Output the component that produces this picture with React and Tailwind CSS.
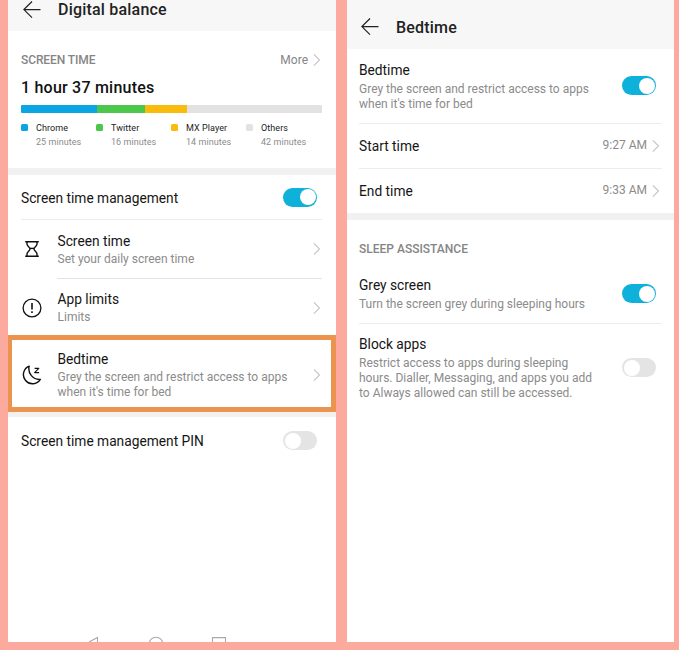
import React from "react";

const usage = [
  { name: "Chrome", minutes: 25, width: "w-[75.5px]", color: "bg-[#0aa5e2]" },
  { name: "Twitter", minutes: 16, width: "w-[48px]", color: "bg-[#4bc84b]" },
  { name: "MX Player", minutes: 14, width: "w-[42.5px]", color: "bg-[#f9bb0c]" },
  { name: "Others", minutes: 42, width: "flex-1", color: "bg-[#e2e2e2]" },
];

const BackArrow = () => (
  <svg
    className="w-[18px] h-[18px] shrink-0"
    viewBox="0 0 18 18"
    fill="none"
    stroke="#222"
    strokeWidth="1.2"
  >
    <path d="M17.5 8.6H1.2M9 0.5L0.9 8.6L9 16.7" />
  </svg>
);

const Chevron = () => (
  <svg
    className="w-[8px] h-[14px] shrink-0"
    viewBox="0 0 8 14"
    fill="none"
    stroke="#c4c4c4"
    strokeWidth="1.1"
  >
    <path d="M0.9 1.4L6.5 7L0.9 12.6" />
  </svg>
);

const Hourglass = () => (
  <svg
    className="w-[20px] h-[20px]"
    viewBox="0 0 20 20"
    fill="none"
    stroke="#111"
    strokeWidth="1.4"
  >
    <path d="M3.2 2.8H16.8M3.2 17.2H16.8" />
    <path d="M5 2.8V5C5 7.4 8 8 8 10C8 12 5 12.6 5 15V17.2M15 2.8V5C15 7.4 12 8 12 10C12 12 15 12.6 15 15V17.2" />
    <path d="M8 9.4H12" />
  </svg>
);

const Alert = () => (
  <svg
    className="w-[20px] h-[20px]"
    viewBox="0 0 20 20"
    fill="none"
    stroke="#111"
    strokeWidth="1.3"
  >
    <circle cx="10" cy="10" r="8.9" />
    <path d="M10 5V11.6M10 13.2V14.9" strokeWidth="1.6" />
  </svg>
);

const Moon = () => (
  <svg
    className="w-[20px] h-[20px]"
    viewBox="0 0 20 20"
    fill="none"
    stroke="#111"
    strokeWidth="1.4"
    strokeLinejoin="round"
  >
    <path d="M7.2 1.2A9.1 9.1 0 1 0 18.3 14.4A10.6 10.6 0 0 1 7.2 1.2Z" />
    <path d="M12.6 3.4H16.8L12.6 7.6H17.1" strokeWidth="1.1" />
  </svg>
);

const Toggle = ({ on }) => (
  <div
    className={`flex items-center w-[34px] h-[19px] rounded-full p-[1.5px] shrink-0 ${
      on ? "bg-[#0eb1da] justify-end" : "bg-[#e4e4e4]"
    }`}
  >
    <div className="w-4 h-4 rounded-full bg-white" />
  </div>
);

const Title = ({ children }) => (
  <div className="text-[13.75px] leading-[18px] text-[#151515]">{children}</div>
);

const Detail = ({ children }) => (
  <div className="text-[12px] leading-[15px] text-[#8b8b8b] whitespace-pre-line">
    {children}
  </div>
);

const LinkRow = ({ icon, title, detail, className }) => (
  <div className={`flex items-center pr-[15px] pl-[14px] ${className}`}>
    <div className="w-[35.5px] shrink-0">{icon}</div>
    <div className="flex-1">
      <Title>{title}</Title>
      <div className="mt-[2px]">
        <Detail>{detail}</Detail>
      </div>
    </div>
    <Chevron />
  </div>
);

const TimeRow = ({ title, time }) => (
  <div className="flex items-center h-[44px] pr-[2px]">
    <div className="flex-1">
      <Title>{title}</Title>
    </div>
    <div className="mr-[5px]">
      <Detail>{time}</Detail>
    </div>
    <Chevron />
  </div>
);

const DigitalBalance = () => (
  <div className="w-[328px] h-[642px] bg-white overflow-hidden flex flex-col">
    <header className="h-[31px] bg-[#f7f7f7] shrink-0 flex items-center pb-[12px] pl-[15px] gap-[17px]">
      <BackArrow />
      <h1 className="text-[16px] leading-[19px] tracking-[0.2px] font-medium text-[#222]">
        Digital balance
      </h1>
    </header>

    <section className="h-[137px] shrink-0 px-[13px] pt-[21px]">
      <div className="flex items-center h-[15px] pr-[2px]">
        <span className="flex-1 text-[12px] font-medium tracking-[-0.1px] text-[#858585]">
          SCREEN TIME
        </span>
        <span className="pt-px text-[12px] leading-[15px] text-[#858585] mr-[5px]">
          More
        </span>
        <Chevron />
      </div>
      <div className="mt-[11px] h-[20px] text-[16px] leading-[20px] tracking-[0.22px] font-medium text-[#111]">
        1 hour 37 minutes
      </div>
      <div className="mt-[7px] flex h-[8px] w-[301px] rounded-[1px] overflow-hidden">
        {usage.map((app) => (
          <div key={app.name} className={`${app.width} ${app.color}`} />
        ))}
      </div>
      <div className="mt-[9px] grid grid-cols-[75px_75px_75px_75px]">
        {usage.map((app) => (
          <div key={app.name} className="flex">
            <div
              className={`w-[7px] h-[7px] rounded-[1.5px] mt-[2px] mr-[8px] shrink-0 ${app.color}`}
            />
            <div className="whitespace-nowrap">
              <div className="text-[9px] leading-[12px] tracking-[0.08px] text-[#222]">
                {app.name}
              </div>
              <div className="mt-[2px] text-[9px] leading-[13px] tracking-[0.05px] text-[#8b8b8b]">
                {app.minutes} minutes
              </div>
            </div>
          </div>
        ))}
      </div>
    </section>

    <div className="h-[7px] bg-[#f1f1f1] shrink-0" />

    <div className="h-[44px] shrink-0 flex items-center justify-between pl-[13px] pr-[19px]">
      <div className="pt-[2px]">
        <Title>Screen time management</Title>
      </div>
      <Toggle on />
    </div>
    <div className="ml-[13px] mr-[14px] h-px bg-[#ededed] shrink-0" />
    <LinkRow
      className="h-[58px] shrink-0"
      icon={<Hourglass />}
      title="Screen time"
      detail="Set your daily screen time"
    />
    <div className="ml-[49px] mr-[14px] h-px bg-[#e4e4e4] shrink-0" />
    <LinkRow
      className="h-[56px] pt-px shrink-0"
      icon={<Alert />}
      title="App limits"
      detail={"Limits"}
    />
    <div className="h-[77px] shrink-0 border-y-[5px] border-l-[4px] border-r-[5px] border-[#ea9450] flex items-center">
      <LinkRow
        className="flex-1 -ml-[4px] -mr-[5px] pt-[2px]"
        icon={<Moon />}
        title="Bedtime"
        detail={"Grey the screen and restrict access to apps\nwhen it's time for bed"}
      />
    </div>
    <div className="h-[5px] bg-[#f3f0ef] shrink-0" />
    <div className="h-[47px] shrink-0 flex items-center justify-between pl-[13px] pr-[19px]">
      <Title>Screen time management PIN</Title>
      <Toggle />
    </div>

    {/* system navigation keys, cut off by the panel edge */}
    <svg
      className="mt-auto ml-[80px] w-[140px] h-[6px] shrink-0"
      viewBox="0 0 140 6"
      fill="none"
      stroke="#a9a9a9"
      strokeWidth="1.1"
    >
      <path d="M1 6L9.5 1.4V6" />
      <circle cx="68" cy="8" r="6.8" />
      <path d="M124.5 6V1.6H137.5V6" />
    </svg>
  </div>
);

const Bedtime = () => (
  <div className="w-[327px] h-[642px] bg-white overflow-hidden">
    <header className="h-[49px] bg-[#f7f7f7] flex items-center pt-[5px] pl-[14px] gap-[17px]">
      <BackArrow />
      <h1 className="pt-px text-[16px] leading-[19px] tracking-[0.2px] font-medium text-[#222]">
        Bedtime
      </h1>
    </header>

    <section className="pl-[12px] pr-[12px]">
      <div className="h-[74.5px] pt-[12px] pr-[6px] flex justify-between border-b border-[#ededed]">
        <div>
          <Title>Bedtime</Title>
          <div className="mt-[3px]">
            <Detail>
              {"Grey the screen and restrict access to apps\nwhen it's time for bed"}
            </Detail>
          </div>
        </div>
        <div className="mt-[15px]">
          <Toggle on />
        </div>
      </div>
      <div className="border-b border-[#ededed]">
        <TimeRow title="Start time" time="9:27 AM" />
      </div>
      <TimeRow title="End time" time="9:33 AM" />
    </section>

    <div className="h-[7.5px] bg-[#f1f1f1]" />

    <section className="pl-[12px] pr-[12px]">
      <h2 className="pt-[21px] text-[12px] leading-[16px] font-medium text-[#858585]">
        SLEEP ASSISTANCE
      </h2>
      <div className="mt-[19px] h-[48px] pr-[6px] flex justify-between border-b border-[#ededed]">
        <div>
          <Title>Grey screen</Title>
          <div className="mt-[3px]">
            <Detail>Turn the screen grey during sleeping hours</Detail>
          </div>
        </div>
        <div className="mt-[8px]">
          <Toggle on />
        </div>
      </div>
      <div className="pt-[11px] pr-[6px] flex justify-between">
        <div>
          <Title>Block apps</Title>
          <div className="mt-[3px]">
            <Detail>
              {"Restrict access to apps during sleeping\nhours. Dialler, Messaging, and apps you add\nto Always allowed can still be accessed."}
            </Detail>
          </div>
        </div>
        <div className="mt-[23px]">
          <Toggle />
        </div>
      </div>
    </section>
  </div>
);

const App = () => {
  return (
    <div className="w-[679px] h-[650px] bg-[#fbaa9d] overflow-hidden flex items-start gap-[11px] pl-[8px] font-['Roboto',sans-serif]">
      <DigitalBalance />
      <Bedtime />
    </div>
  );
};

export default App;
